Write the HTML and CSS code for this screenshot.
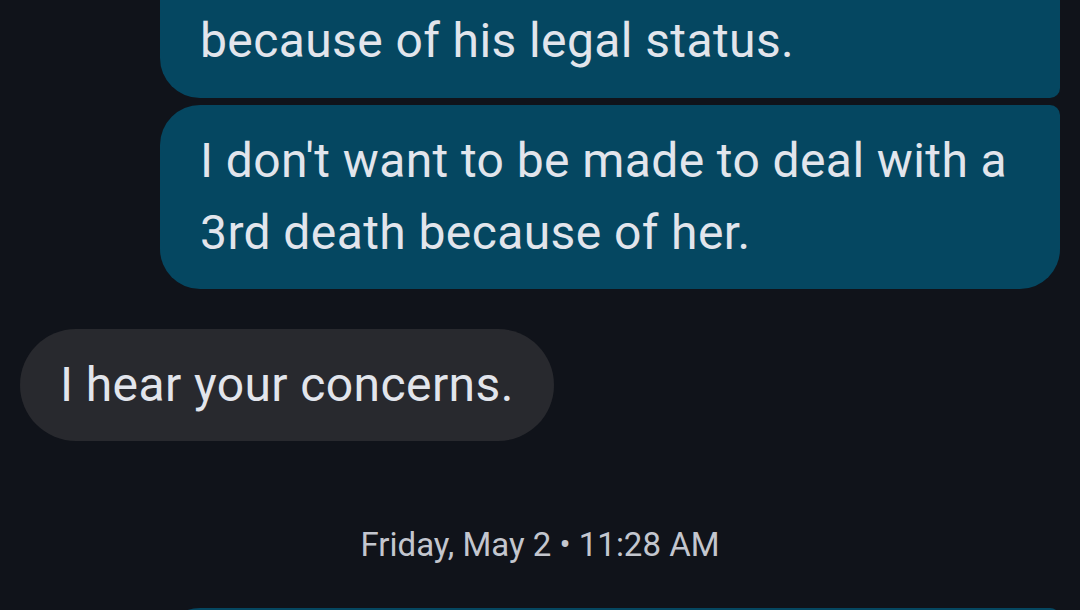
FILE: index.html
```html
<!DOCTYPE html>
<html lang="en">

<head>
    <meta charset="UTF-8" />
    <meta name="viewport" content="width=device-width, initial-scale=1" />
    <title>Messages</title>
    <link rel="stylesheet" href="styles.css">
</head>

<body>

    <div class="thread">
        <div class="group outgoing">
            <div class="bubble first">because of his legal status.</div>
            <div class="bubble last">I don't want to be made to deal with a 3rd death because of her.</div>
        </div>

        <div class="group incoming">
            <div class="bubble">I hear your concerns.</div>
        </div>

        <div class="stamp">Friday, May 2 &bull; 11:28 AM</div>

        <div class="group outgoing">
            <div class="bubble last">&nbsp;</div>
        </div>
    </div>

</body>

</html>
```

FILE: styles.css
```css
html,
body {
    margin: 0;
    padding: 0;
    height: 100%;
    background-color: #10131a;
    overflow: hidden;
}

.thread {
    display: flex;
    flex-direction: column;
    margin-top: -39px;
    font-family: Roboto, "Noto Sans", sans-serif;
    color: #e2e5ec;
}

.group {
    display: flex;
    flex-direction: column;
    gap: 7px;
}

.outgoing {
    align-items: flex-end;
    padding: 0 20px 0 160px;
}

.incoming {
    align-items: flex-start;
    padding: 0 20px;
    margin-top: 40px;
}

.bubble {
    font-size: 48px;
    line-height: 72px;
    letter-spacing: 0.4px;
    padding: 20px 40px;
    border-radius: 40px;
}

.outgoing .bubble {
    align-self: stretch;
    background-color: #054761;
    border-radius: 40px 10px 10px 40px;
}

.outgoing .bubble.first {
    padding-top: 44px;
    padding-bottom: 21px;
}

.outgoing .bubble.last {
    border-radius: 40px 10px 40px 40px;
}

.incoming .bubble {
    background-color: #28292e;
    border-radius: 56px;
    padding: 20px 40px;
}

.stamp {
    text-align: center;
    font-size: 33px;
    color: #c3c6ce;
    margin: 84px 0 44px;
}
```
